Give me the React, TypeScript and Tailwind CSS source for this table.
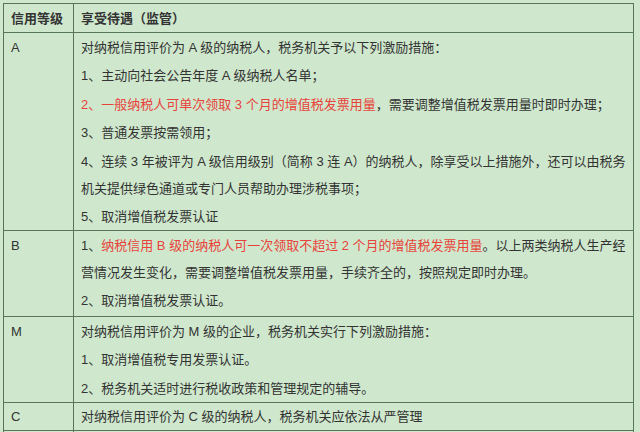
import type { ReactNode } from "react";

/* ── Table data ───────────────────────────────────────────────────────── */

interface Row {
  grade: string;
  height: string;
  paras: ReactNode[];
}

const Red = ({ children }: { children: ReactNode }) => (
  <span className="text-[#e8423a]">{children}</span>
);

const ROWS: Row[] = [
  {
    grade: "A",
    height: "h-[198px]",
    paras: [
      "对纳税信用评价为 A 级的纳税人，税务机关予以下列激励措施：",
      "1、主动向社会公告年度 A 级纳税人名单；",
      <>
        <Red>2、一般纳税人可单次领取 3 个月的增值税发票用量</Red>
        ，需要调整增值税发票用量时即时办理；
      </>,
      "3、普通发票按需领用；",
      <>
        4、连续 3 年被评为 A 级信用级别（简称 3 连 A）的纳税人，除享受以上措施外，还可以由税务
        <br />
        机关提供绿色通道或专门人员帮助办理涉税事项；
      </>,
      "5、取消增值税发票认证",
    ],
  },
  {
    grade: "B",
    height: "h-[86px]",
    paras: [
      <>
        1、<Red>纳税信用 B 级的纳税人可一次领取不超过 2 个月的增值税发票用量</Red>
        。以上两类纳税人生产经
        <br />
        营情况发生变化，需要调整增值税发票用量，手续齐全的，按照规定即时办理。
      </>,
      "2、取消增值税发票认证。",
    ],
  },
  {
    grade: "M",
    height: "h-[84px]",
    paras: [
      "对纳税信用评价为 M 级的企业，税务机关实行下列激励措施：",
      "1、取消增值税专用发票认证。",
      "2、税务机关适时进行税收政策和管理规定的辅导。",
    ],
  },
  {
    grade: "C",
    height: "h-[28px]",
    paras: ["对纳税信用评价为 C 级的纳税人，税务机关应依法从严管理"],
  },
];

/* ── Component ────────────────────────────────────────────────────────── */

export default function App() {
  return (
    <div
      className="h-[432px] w-[640px] overflow-hidden bg-[#cfe8cd] pl-[3px] pt-[3px] text-[13px] text-[#333333]"
      style={{ fontFamily: '"Liberation Sans", "Noto Sans CJK SC", sans-serif' }}
    >
      <table className="w-[631px] table-fixed border-collapse border border-[#56755a]">
        <colgroup>
          <col className="w-[70px]" />
          <col />
        </colgroup>
        <thead>
          <tr>
            <th className="h-[29px] border border-[#56755a] px-[7px] text-left align-middle font-bold leading-[27px]">
              信用等级
            </th>
            <th className="border border-[#56755a] px-[7px] text-left align-middle font-bold leading-[27px]">
              享受待遇（监管）
            </th>
          </tr>
        </thead>
        <tbody>
          {ROWS.map((row) => (
            <tr key={row.grade} className={row.height}>
              <td className="border border-[#56755a] px-[7px] pt-[0.5px] align-top leading-[27px]">
                {row.grade}
              </td>
              <td className="border border-[#56755a] px-[7px] pt-[0.5px] align-top">
                <div className="flex flex-col gap-[1.5px]">
                  {row.paras.map((p, i) => (
                    <p key={i} className="whitespace-nowrap leading-[27px]">
                      {p}
                    </p>
                  ))}
                </div>
              </td>
            </tr>
          ))}
          {/* next row, cut off by the bottom edge */}
          <tr className="h-[28px]">
            <td className="border border-[#56755a]" />
            <td className="border border-[#56755a]" />
          </tr>
        </tbody>
      </table>
    </div>
  );
}
